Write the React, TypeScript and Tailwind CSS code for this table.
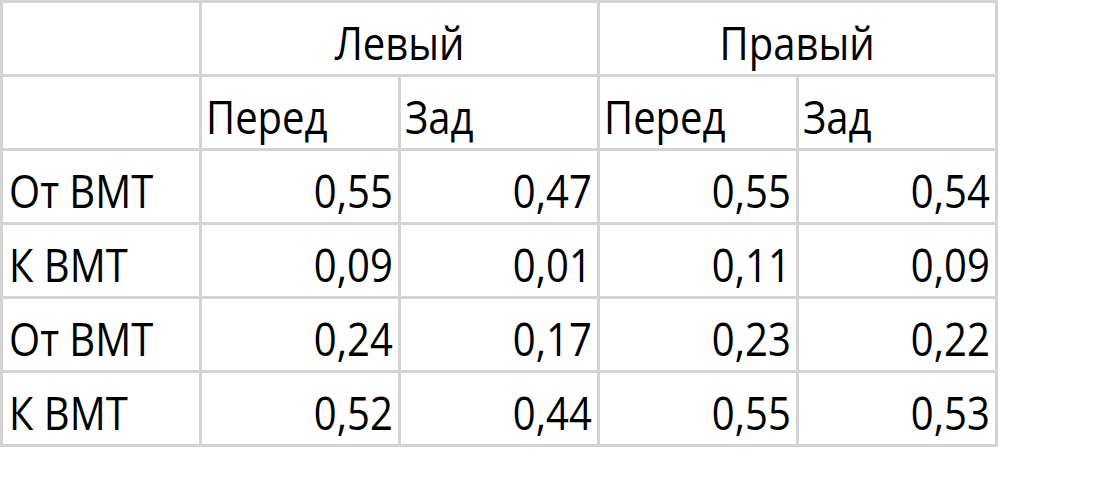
const rows: [string, string[]][] = [
  ['От ВМТ', ['0,55', '0,47', '0,55', '0,54']],
  ['К ВМТ', ['0,09', '0,01', '0,11', '0,09']],
  ['От ВМТ', ['0,24', '0,17', '0,23', '0,22']],
  ['К ВМТ', ['0,52', '0,44', '0,55', '0,53']],
];

// Excel-like cell text: narrow humanist face, squeezed a bit horizontally
const txt = "block font-['Open_Sans',sans-serif] text-[46px] leading-none text-black scale-x-[0.87]";

function Cell({ children, className = '' }: { children?: React.ReactNode; className?: string }) {
  return <div className={`flex items-end bg-white pb-[9px] ${className}`}>{children}</div>;
}

export default function App() {
  return (
    <div className="h-[487px] w-full bg-white">
      <div className="grid w-[998px] grid-cols-[repeat(5,196px)] grid-rows-[repeat(6,71px)] gap-[3px] bg-[#d4d4d4] p-[3px]">
        <Cell />
        <Cell className="col-span-2 justify-center">
          <span className={`${txt} origin-center`}>Левый</span>
        </Cell>
        <Cell className="col-span-2 justify-center">
          <span className={`${txt} origin-center`}>Правый</span>
        </Cell>

        <Cell />
        {['Перед', 'Зад', 'Перед', 'Зад'].map((h, i) => (
          <Cell key={i} className="pl-[4px]">
            <span className={`${txt} origin-left`}>{h}</span>
          </Cell>
        ))}

        {rows.map(([label, vals], r) => (
          <div key={r} className="contents">
            <Cell className="pl-[6px]">
              <span className={`${txt} origin-left`}>{label}</span>
            </Cell>
            {vals.map((v, i) => (
              <Cell key={i} className="justify-end pr-[5px]">
                <span className={`${txt} origin-right`}>{v}</span>
              </Cell>
            ))}
          </div>
        ))}
      </div>
    </div>
  );
}
